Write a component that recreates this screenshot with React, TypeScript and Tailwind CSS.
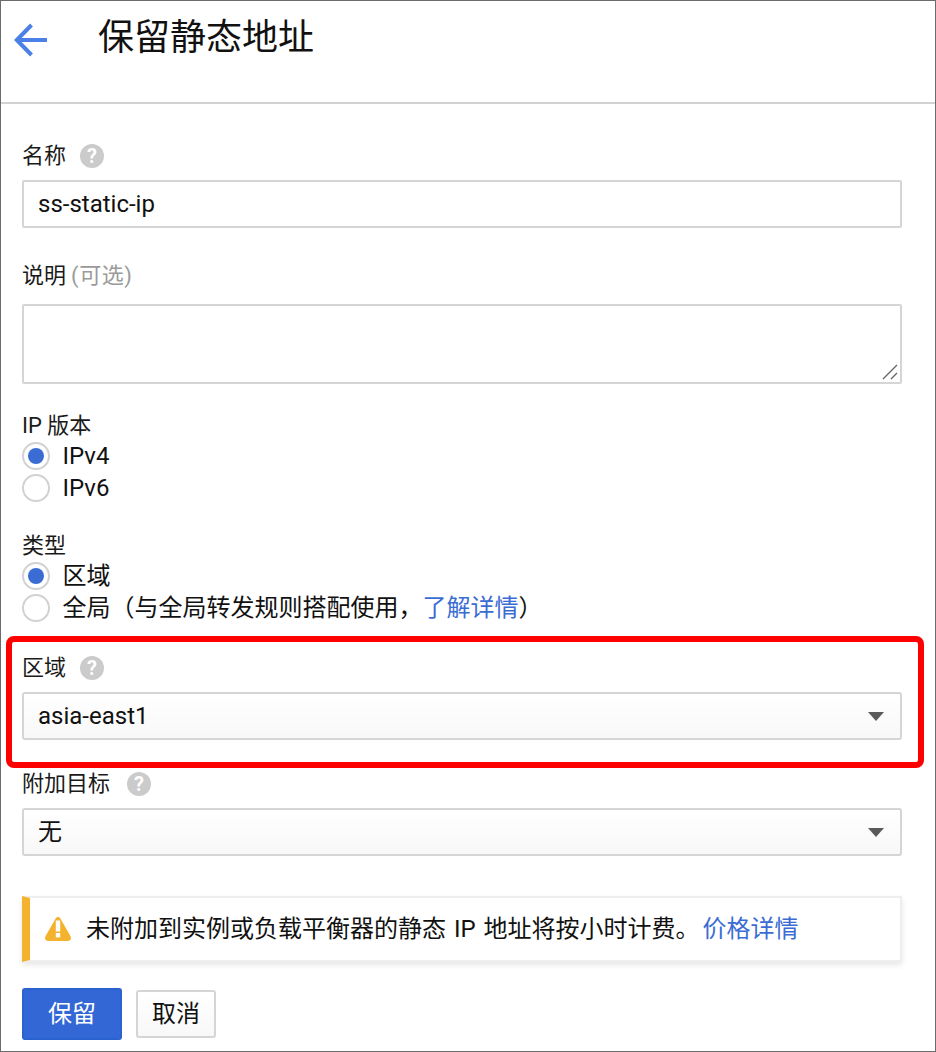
import React from "react";

const Help = ({ wide }: { wide?: boolean }) => (
  <span className={`${wide ? "ml-[17px]" : "ml-[14px]"} flex h-[24px] w-[24px] items-center justify-center rounded-full bg-[#cbcbcb] text-[20px] font-bold leading-[24px] text-white`}>
    ?
  </span>
);

const Label = ({ children, help, wide }: { children: React.ReactNode; help?: boolean; wide?: boolean }) => (
  <div className="flex h-[32px] items-center text-[22px] leading-[32px] text-[#1a1a1a]">
    {children}
    {help && <Help wide={wide} />}
  </div>
);

const GroupLabel = ({ children }: { children: React.ReactNode }) => (
  <div className="flex h-[28px] items-center text-[22px] leading-[28px] text-[#1a1a1a]">{children}</div>
);

const Radio = ({ checked, children }: { checked?: boolean; children: React.ReactNode }) => (
  <div className="flex h-[32px] items-center text-[24px] leading-[32px] text-[#111]">
    <span className="flex h-[28px] w-[28px] items-center justify-center rounded-full border-2 border-[#d2d2d2] bg-white">
      {checked && <span className="h-[16px] w-[16px] rounded-full bg-[#3b6cd4]" />}
    </span>
    <span className="ml-[12.5px]">{children}</span>
  </div>
);

const Select = ({ value }: { value: string }) => (
  <div className="flex h-[48px] items-center justify-between rounded-[3px] border-2 border-[#d5d5d5] bg-gradient-to-b from-white to-[#f8f8f8] pl-[14px] pr-[16px] text-[24px] text-[#111]">
    <span>{value}</span>
    <svg width="16" height="9" viewBox="0 0 16 9">
      <path d="M0 0H16L8 9Z" fill="#5a5a5a" />
    </svg>
  </div>
);

export default function App() {
  return (
    <div className="relative h-[1052px] w-[936px] border border-[#6b6b6b] bg-white font-['Roboto','Noto_Sans_CJK_SC',sans-serif]">
      <header className="flex h-[103px] items-start border-b-2 border-[#d2d2d2]">
        <svg className="ml-[13px] mt-[22px]" width="34" height="34" viewBox="0 0 34 34" fill="none">
          <path d="M33 17H4M17.5 2L2.8 17L17.5 32" stroke="#4a80e8" strokeWidth="4" />
        </svg>
        <h1 className="ml-[50px] mt-[13px] text-[36px] font-normal leading-[48px] text-[#111]">保留静态地址</h1>
      </header>

      <main className="pl-[21px] pr-[33px]">
        <div className="mt-[36px]">
          <Label help>名称</Label>
        </div>
        <div className="mt-[8px] flex h-[48px] items-center rounded-[2px] border-2 border-[#d5d5d5] pl-[14px] text-[24px] text-[#111]">
          ss-static-ip
        </div>

        <div className="mt-[32px]">
          <Label>
            说明<span className="ml-[5px] tracking-[0.6px] text-[#9a9a9a]">(可选)</span>
          </Label>
        </div>
        <div className="relative mt-[12px] h-[80px] rounded-[2px] border-2 border-[#d5d5d5]">
          <svg className="absolute bottom-[2px] right-[2px]" width="16" height="16" viewBox="0 0 16 16" fill="none">
            <path d="M1 15L15 1M9 15L15 9" stroke="#666" strokeWidth="1.4" />
          </svg>
        </div>

        <div className="mt-[28px]">
          <GroupLabel>IP 版本</GroupLabel>
        </div>
        <Radio checked>IPv4</Radio>
        <Radio>IPv6</Radio>

        <div className="mt-[28px]">
          <GroupLabel>类型</GroupLabel>
        </div>
        <Radio checked>区域</Radio>
        <Radio>
          全局（与全局转发规则搭配使用，<span className="text-[#3b6cd4]">了解详情</span>）
        </Radio>

        <div className="mt-[28px]">
          <Label help>区域</Label>
        </div>
        <div className="mt-[8px]">
          <Select value="asia-east1" />
        </div>

        <div className="mt-[28px]">
          <Label help wide>附加目标</Label>
        </div>
        <div className="mt-[8px]">
          <Select value="无" />
        </div>

        <div className="mt-[40px] flex h-[66px] items-center border-l-[8px] border-y-2 border-r-2 border-y-[#eeeeee] border-r-[#eeeeee] border-l-[#f4b32e] bg-white pl-[15px] text-[24px] leading-[32px] text-[#111] shadow-[0_3px_6px_rgba(0,0,0,0.1)]">
          <svg width="26" height="24" viewBox="0 0 26 24">
            <path d="M13 0C14 0 14.8 .5 15.4 1.5L25.4 19C26.8 21.6 25.4 24 23 24H3C.6 24-.8 21.6 .6 19L10.6 1.5C11.2 .5 12 0 13 0Z" fill="#f4b32e" />
            <rect x="10.8" y="3.5" width="4.4" height="11" fill="#fff" />
            <rect x="10.8" y="16" width="4.4" height="4.4" fill="#fff" />
          </svg>
          <span className="ml-[15px]">
            未附加到实例或负载平衡器的静态<span className="mx-[2px]"> IP </span>地址将按小时计费。<span className="ml-[3px] text-[#3b6cd4]">价格详情</span>
          </span>
        </div>

        <div className="mt-[26px] flex items-center">
          <button className="flex h-[52px] w-[100px] items-center justify-center rounded-[3px] border-2 border-[#2a62d0] bg-[#3367d6] text-[24px] text-white">
            保留
          </button>
          <button className="ml-[14px] flex h-[48px] w-[80px] items-center justify-center rounded-[3px] border-2 border-[#d5d5d5] bg-gradient-to-b from-white to-[#f8f8f8] text-[24px] text-[#111]">
            取消
          </button>
        </div>
      </main>

      <div className="pointer-events-none absolute left-[5px] top-[635px] h-[132px] w-[918px] rounded-[8px] border-[6px] border-[#ff0000]" />
    </div>
  );
}
